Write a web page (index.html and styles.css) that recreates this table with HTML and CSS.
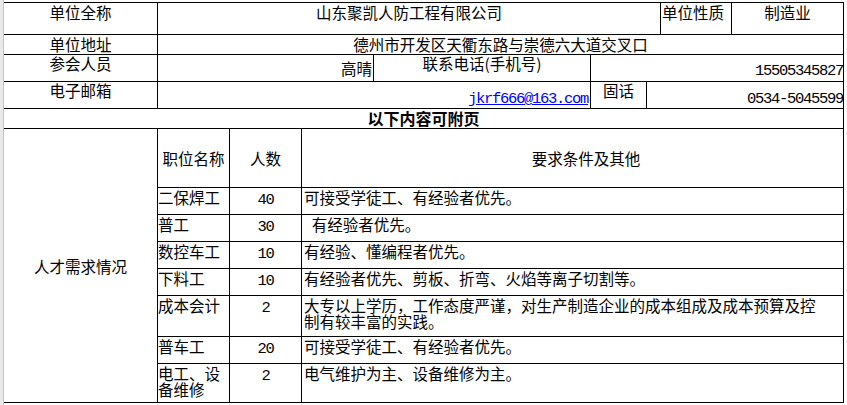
FILE: index.html
```html
<!DOCTYPE html>
<html lang="zh-CN">
<head>
<meta charset="utf-8">
<title>单位招聘信息</title>
<link rel="stylesheet" href="styles.css">
</head>
<body>
<div class="sheet">
  <div class="grid">
    <div class="c ctr pt1">单位全称</div>
    <div class="c ctr pt1 s6">山东聚凯人防工程有限公司</div>
    <div class="c pt1 pl1">单位性质</div>
    <div class="c ctr pt1">制造业</div>

    <div class="c ctr pt1">单位地址</div>
    <div class="c ctr pt1 s8">德州市开发区天衢东路与崇德六大道交叉口</div>

    <div class="c ctr">参会人员</div>
    <div class="c rt pt5 pr1 s3">高晴</div>
    <div class="c ctr">联系电话(手机号)</div>
    <div class="c rt pt5 s4"><span class="num">15505345827</span></div>

    <div class="c ctr">电子邮箱</div>
    <div class="c rt pt6 pr2 s4"><a class="num link" href="#">jkrf666@163.com</a></div>
    <div class="c ctr">固话</div>
    <div class="c rt pt6 s3"><span class="num">0534-5045599</span></div>

    <div class="c ctr pt1 bold s9">以下内容可附页</div>

    <div class="c mid rs8">人才需求情况</div>
    <div class="c mid">职位名称</div>
    <div class="c mid">人数</div>
    <div class="c mid s6 hdr">要求条件及其他</div>

    <div class="c job">二保焊工</div>
    <div class="c ctr pt1"><span class="num">40</span></div>
    <div class="c desc s6">可接受学徒工、有经验者优先。</div>

    <div class="c job">普工</div>
    <div class="c ctr pt1"><span class="num">30</span></div>
    <div class="c desc s6">&ensp;有经验者优先。</div>

    <div class="c job">数控车工</div>
    <div class="c ctr pt1"><span class="num">10</span></div>
    <div class="c desc s6">有经验、懂编程者优先。</div>

    <div class="c job">下料工</div>
    <div class="c ctr pt1"><span class="num">10</span></div>
    <div class="c desc s6">有经验者优先、剪板、折弯、火焰等离子切割等。</div>

    <div class="c job">成本会计</div>
    <div class="c ctr pt1"><span class="num">2</span></div>
    <div class="c desc s6">大专以上学历，工作态度严谨，对生产制造企业的成本组成及成本预算及控<br>制有较丰富的实践。</div>

    <div class="c job">普车工</div>
    <div class="c ctr pt1"><span class="num">20</span></div>
    <div class="c desc s6">可接受学徒工、有经验者优先。</div>

    <div class="c job">电工、设<br>备维修</div>
    <div class="c ctr pt1"><span class="num">2</span></div>
    <div class="c desc s6">电气维护为主、设备维修为主。</div>
  </div>
</div>
</body>
</html>
```

FILE: styles.css
```css
html, body {
  margin: 0;
  padding: 0;
  background: #fff;
  overflow: hidden;
}

body {
  font-family: "Noto Sans CJK SC", "Noto Sans", sans-serif;
  font-size: 15.5px;
  line-height: 16px;
  color: #000;
}

.sheet {
  box-sizing: border-box;
  height: 405px;
  padding-top: 2px;
  display: flex;
  align-items: flex-start;
  background: linear-gradient(to right, #e9e9e9 0 3px, #c4c4c4 3px 4px, #fff 4px);
}

.grid {
  margin-left: 4px;
  display: grid;
  gap: 1px;
  padding: 1px 1px 1px 0;
  background: #000;
  grid-template-columns: 153px 71px 71px 71px 216px 55px 13px 70px 111px;
  grid-template-rows: 31px 19px 26px 26px 19px 58px 26px 26px 26px 26px 40px 26px 38px;
}

.c {
  background: #fff;
  white-space: nowrap;
  box-sizing: border-box;
  min-width: 0;
}

.s3 { grid-column: span 3; }
.s4 { grid-column: span 4; }
.s6 { grid-column: span 6; }
.s8 { grid-column: span 8; }
.s9 { grid-column: span 9; }
.rs8 { grid-row: span 8; }

.ctr { text-align: center; }
.rt { text-align: right; }
.pt1 { padding-top: 1px; }
.pt5 { padding-top: 5px; }
.pt6 { padding-top: 6px; }
.pl1 { padding-left: 1px; }
.pr1 { padding-right: 1px; }
.pr2 { padding-right: 2px; }

.bold {
  font-weight: 700;
  font-size: 16px;
}

.mid {
  display: flex;
  align-items: center;
  justify-content: center;
}

.hdr { padding-left: 27px; }

.job {
  padding-top: 1px;
  white-space: normal;
}

.desc {
  padding: 1px 0 0 2px;
  white-space: normal;
}

.num {
  font-family: "Liberation Mono", monospace;
  font-size: 15.5px;
  letter-spacing: -1.3px;
  line-height: 0;
}

.link {
  color: #0000ff;
  text-decoration: underline;
}
```
